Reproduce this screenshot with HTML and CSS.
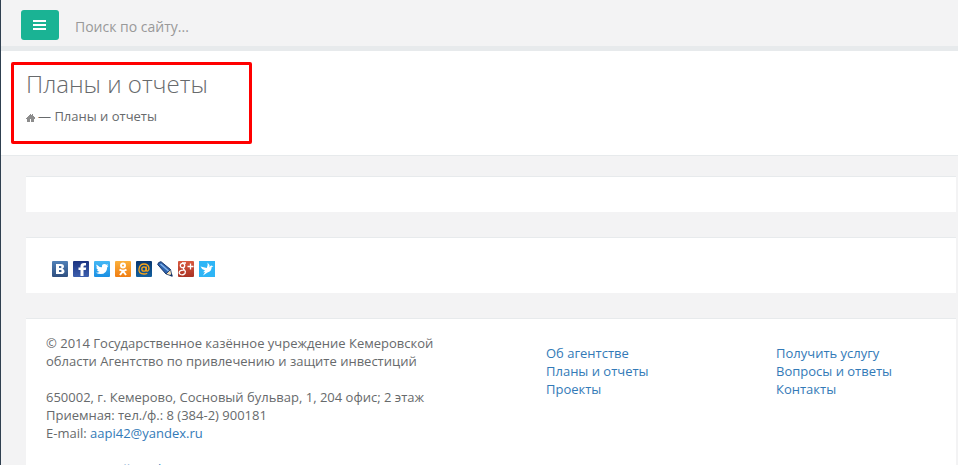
FILE: index.html
```html
<!DOCTYPE html>
<html lang="ru">
<head>
  <meta charset="UTF-8" />
  <meta name="viewport" content="width=device-width, initial-scale=1.0" />
  <title>Планы и отчеты</title>
  <link rel="stylesheet" href="styles.css">
</head>
<body>
<nav class="navbar">
  <button type="button" class="menu-btn" aria-label="Меню">
    <svg width="14" height="12" viewBox="0 0 14 12"><path fill="#fff" d="M0 1h13v2H0zM0 5h13v2H0zM0 9h13v2H0z"/></svg>
  </button>
  <form class="search">
    <input type="text" class="search-input" placeholder="Поиск по сайту..." aria-label="Поиск по сайту" />
  </form>
</nav>
<header class="heading">
  <div class="marked">
    <h1>Планы и отчеты</h1>
    <div class="breadcrumb">
      <a href="#" aria-label="Главная"><svg width="9" height="8" viewBox="0 0 9 8" shape-rendering="crispEdges"><path fill="#8c8c8c" d="M4 0h1v1h1V0h1v2h1v1h1v2H8v3H5V5H4v3H1V5H0V4h1V3h1V2h1V1h1z"/></svg></a>
      <span>— Планы и отчеты</span>
    </div>
  </div>
</header>
<main class="wrapper">
  <section class="ibox"></section>
  <section class="ibox share">
    <a href="#" aria-label="ВКонтакте">
      <svg viewBox="0 0 16 16">
        <defs><linearGradient id="vk" x2="0" y2="1"><stop stop-color="#5181b8"/><stop offset="1" stop-color="#2f4f80"/></linearGradient></defs>
        <rect width="16" height="16" rx="1" fill="url(#vk)"/>
        <path fill="#fff" fill-rule="evenodd" d="M4 3h5q3 0 3 2.500q0 1.500-1.500 2.200q2 .6 2 2.500Q12.500 13 9 13H4zM7 5v2h1.500q1 0 1-1t-1-1zM7 9v2h1.500q1.200 0 1.200-1T8.500 9z"/>
      </svg>
    </a>
    <a href="#" aria-label="Facebook">
      <svg viewBox="0 0 16 16">
        <defs><linearGradient id="fb" x2="0" y2="1"><stop stop-color="#1c3481"/><stop offset="1" stop-color="#3d5fae"/></linearGradient></defs>
        <rect width="16" height="16" rx="1" fill="url(#fb)"/>
        <path fill="#fff" d="M7.500 15V9h-2V6.500h2V5q0-3 3.500-3h2v2.500h-1.200q-1.300 0-1.300 1v1h2.700l-.4 2.500h-2.300v6z"/>
      </svg>
    </a>
    <a href="#" aria-label="Twitter">
      <svg viewBox="0 0 16 16">
        <defs><linearGradient id="tw" x2="0" y2="1"><stop stop-color="#45b8f5"/><stop offset="1" stop-color="#1a8fe3"/></linearGradient></defs>
        <rect width="16" height="16" rx="1" fill="url(#tw)"/>
        <path fill="#fff" d="M2.500 3.500Q5 6.200 8 6.300 7.500 3 10.500 3q1.200 0 2 .8L14 3.300 13.200 5l1.300-.3-1.300 1.500Q13 13 6.500 13 4 13 2 11.800q2.300 0 3.500-1Q3.500 10.500 3 9h1.200Q2.300 8 2.300 6.300l1 .3Q1.800 5 2.500 3.500z"/>
      </svg>
    </a>
    <a href="#" aria-label="Одноклассники">
      <svg viewBox="0 0 16 16">
        <defs><linearGradient id="ok" x2="0" y2="1"><stop stop-color="#fbb03b"/><stop offset="1" stop-color="#f07e12"/></linearGradient></defs>
        <rect width="16" height="16" rx="1" fill="url(#ok)"/>
        <g fill="none" stroke="#fff" stroke-width="2"><circle cx="8" cy="4.500" r="2"/><path d="M4.500 8.500Q8 11 11.500 8.500M8 10l-3 4M8 10l3 4"/></g>
      </svg>
    </a>
    <a href="#" aria-label="Мой мир">
      <svg viewBox="0 0 16 16">
        <defs><linearGradient id="mm" x2="0" y2="1"><stop stop-color="#07366f"/><stop offset="1" stop-color="#12609f"/></linearGradient></defs>
        <rect width="16" height="16" rx="1" fill="url(#mm)"/>
        <g fill="none" stroke="#f9a51a" stroke-width="1.300"><circle cx="8" cy="8" r="2.200"/><path d="M10.200 5.500v3.700q.3 1.300 1.500.8 1.500-1 1.300-3Q12.300 3 8 3T3 8t5 5q2 0 3.200-.8"/></g>
      </svg>
    </a>
    <a href="#" aria-label="Живой журнал">
      <svg viewBox="0 0 16 16">
        <path fill="#2e62ab" stroke="#17366b" d="M.7 3.500Q1 1 4 .7L13.500 8.500 9 13z"/>
        <path stroke="#82b5ef" stroke-width="1.500" d="M3.500 3l8 7"/>
        <path fill="#f3dfb8" stroke="#17366b" stroke-width=".8" d="M9 13l4.500-4.500 1.700 6.700z"/>
        <path fill="#17366b" d="M12.500 14.800l2.200-2.200.9 3z"/>
      </svg>
    </a>
    <a href="#" aria-label="Google+">
      <svg viewBox="0 0 16 16">
        <defs><linearGradient id="gp" x2="0" y2="1"><stop stop-color="#d9593f"/><stop offset="1" stop-color="#a93224"/></linearGradient></defs>
        <rect width="16" height="16" rx="1" fill="url(#gp)"/>
        <g fill="none" stroke="#fff" stroke-width="1.300"><circle cx="4.500" cy="4.500" r="2.200"/><path d="M4 2h4M6 6.500Q4.500 8 6.500 9 8 10.500 7 12.500 5 14.500 2.500 13.500 0 12 2 10q1.500-1 4-.8M9.500 5.500h6M12.500 2.500v6"/></g>
      </svg>
    </a>
    <a href="#" aria-label="Surfingbird">
      <svg viewBox="0 0 16 16">
        <rect width="16" height="16" fill="#2eb5f6"/>
        <path fill="#fff" d="M8.500 1.500Q11 3.500 10.700 6.500 11 4.500 12.500 4.500l2 1-1.800.5Q12.500 10.500 8.500 11.500L4 14.500 6 11 4 11.300 6 9.500Q2.500 8.500 1.500 5.500L7.800 7Q9.200 4.500 8.500 1.500z"/>
      </svg>
    </a>
  </section>
  <footer class="ibox footer">
    <div class="about">
      <p>© 2014 Государственное казённое учреждение Кемеровской области Агентство по привлечению и защите инвестиций</p>
      <p>650002, г. Кемерово, Сосновый бульвар, 1, 204 офис; 2 этаж<br>
        Приемная: тел./ф.: 8 (384-2) 900181<br>
        E-mail: <a href="mailto:aapi42@yandex.ru">aapi42@yandex.ru</a></p>
      <p><a href="#">Кемеровский график</a></p>
    </div>
    <ul class="links">
      <li><a href="#">Об агентстве</a></li>
      <li><a href="#">Планы и отчеты</a></li>
      <li><a href="#">Проекты</a></li>
    </ul>
    <ul class="links">
      <li><a href="#">Получить услугу</a></li>
      <li><a href="#">Вопросы и ответы</a></li>
      <li><a href="#">Контакты</a></li>
    </ul>
  </footer>
</main>
</body>
</html>
```
FILE: styles.css
```css
* {
  box-sizing: border-box;
}
html {
  overflow: hidden;
}
body {
  margin: 0;
  min-height: 100vh;
  background-color: #f3f3f4;
  border-left: 1px solid #2f4050;
  font-family: "Open Sans", "Noto Sans", sans-serif;
  font-size: 13px;
  line-height: 18px;
  color: #676a6c;
}
a {
  color: #337ab7;
  text-decoration: none;
}
.navbar {
  display: flex;
  align-items: flex-start;
  gap: 16px;
  padding: 10px 20px 6px;
  border-bottom: 5px solid #e7eaec;
}
.menu-btn {
  display: flex;
  align-items: center;
  justify-content: center;
  width: 38px;
  height: 30px;
  padding: 0;
  border: none;
  border-radius: 3px;
  background-color: #1ab394;
  cursor: pointer;
}
.search {
  flex: 1;
}
.search-input {
  width: 100%;
  height: 30px;
  padding: 2px 0 0;
  border: none;
  outline: none;
  background: none;
  font-family: inherit;
  font-size: 14px;
}
.search-input::placeholder {
  color: #999;
}
.heading {
  padding: 11px 10px;
  background-color: #fff;
  border-bottom: 1px solid #e7eaec;
}
.marked {
  width: 241px;
  padding: 4px 12px 16px;
  border: 3px solid #f00;
  border-radius: 2px;
}
h1 {
  margin: 0 0 8px;
  font-size: 24px;
  font-weight: 300;
  line-height: 30px;
}
.breadcrumb {
  display: flex;
  align-items: center;
  gap: 3px;
}
.breadcrumb a {
  display: flex;
  padding-top: 4px;
}
.wrapper {
  display: flex;
  flex-direction: column;
  gap: 25px;
  padding: 20px 2px 0 25px;
}
.ibox {
  min-height: 36px;
  background-color: #fff;
  border-top: 1px solid #e7eaec;
}
.share {
  display: flex;
  gap: 5px;
  padding: 23px 26px 16px;
}
.share svg {
  display: block;
  width: 16px;
  height: 16px;
}
.footer {
  display: grid;
  grid-template-columns: 1fr 200px 160px;
  column-gap: 30px;
  padding: 15px 20px;
}
.about {
  max-width: 400px;
}
.about p {
  margin: 0 0 18px;
}
.links {
  margin: 10px 0 0;
  padding: 0;
  list-style: none;
}
```
